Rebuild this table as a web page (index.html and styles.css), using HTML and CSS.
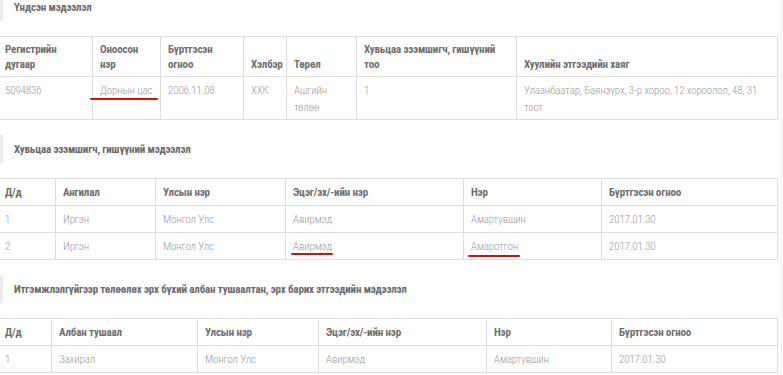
FILE: index.html
```html
<!DOCTYPE html>
<html lang="mn">
<head>
<meta charset="utf-8">
<title>Мэдээлэл</title>
<link rel="stylesheet" href="styles.css">
</head>
<body>
<div class="page">
  <section class="section">
    <h3 class="section-title">Үндсэн мэдээлэл</h3>
    <table class="grid grid-main">
      <colgroup>
        <col class="w95"><col class="w68"><col class="w83"><col class="w43"><col class="w70"><col class="w160"><col>
      </colgroup>
      <thead>
        <tr>
          <th>Регистрийн дугаар</th>
          <th>Оноосон нэр</th>
          <th>Бүртгэсэн огноо</th>
          <th>Хэлбэр</th>
          <th>Төрөл</th>
          <th>Хувьцаа эзэмшигч, гишүүний тоо</th>
          <th>Хуулийн этгээдийн хаяг</th>
        </tr>
      </thead>
      <tbody>
        <tr>
          <td>5094836</td>
          <td><span class="mark mark-a">Дорнын цас</span></td>
          <td>2006.11.08</td>
          <td>ХХК</td>
          <td>Ашгийн төлөө</td>
          <td>1</td>
          <td>Улаанбаатар, Баянзүрх, 3-р хороо, 12 хороолол, 48, 31 тоот</td>
        </tr>
      </tbody>
    </table>
  </section>

  <section class="section">
    <h3 class="section-title">Хувьцаа эзэмшигч, гишүүний мэдээлэл</h3>
    <table class="grid">
      <colgroup>
        <col class="w58"><col class="w100"><col class="w130"><col class="w178"><col class="w138"><col>
      </colgroup>
      <thead>
        <tr>
          <th>Д/д</th>
          <th>Ангилал</th>
          <th>Улсын нэр</th>
          <th>Эцэг/эх/-ийн нэр</th>
          <th>Нэр</th>
          <th>Бүртгэсэн огноо</th>
        </tr>
      </thead>
      <tbody>
        <tr>
          <td>1</td>
          <td>Иргэн</td>
          <td>Монгол Улс</td>
          <td>Авирмэд</td>
          <td>Амартүвшин</td>
          <td>2017.01.30</td>
        </tr>
        <tr>
          <td>2</td>
          <td>Иргэн</td>
          <td>Монгол Улс</td>
          <td><span class="mark mark-b">Авирмэд</span></td>
          <td><span class="mark mark-c">Амаротгон</span></td>
          <td>2017.01.30</td>
        </tr>
      </tbody>
    </table>
  </section>

  <section class="section">
    <h3 class="section-title">Итгэмжлэлгүйгээр төлөөлөх эрх бүхий албан тушаалтан, эрх барих этгээдийн мэдээлэл</h3>
    <table class="grid">
      <colgroup>
        <col class="w54"><col class="w146"><col class="w121"><col class="w168"><col class="w125"><col>
      </colgroup>
      <thead>
        <tr>
          <th>Д/д</th>
          <th>Албан тушаал</th>
          <th>Улсын нэр</th>
          <th>Эцэг/эх/-ийн нэр</th>
          <th>Нэр</th>
          <th>Бүртгэсэн огноо</th>
        </tr>
      </thead>
      <tbody>
        <tr>
          <td>1</td>
          <td>Захирал</td>
          <td>Монгол Улс</td>
          <td>Авирмэд</td>
          <td>Амартүвшин</td>
          <td>2017.01.30</td>
        </tr>
      </tbody>
    </table>
  </section>
</div>
</body>
</html>
```

FILE: styles.css
```css
* { box-sizing: border-box; }

html, body {
  margin: 0;
  padding: 0;
  background: #fff;
}

body {
  font-family: Roboto, "Liberation Sans", sans-serif;
  font-stretch: 77%;
  font-size: 11px;
  letter-spacing: -0.15px;
  color: #9a9a9a;
  overflow: hidden;
}

.page {
  width: 782px;
  margin-top: -7px;
  border-right: 1px solid #f0f0f0;
  min-height: 400px;
}

.section {
  display: flex;
  flex-direction: column;
}

.section-title {
  margin: 0 0 15px 0;
  height: 28px;
  display: flex;
  align-items: center;
  border-left: 3px solid #ececec;
  padding-left: 11px;
  font-size: 11px;
  font-weight: 700;
  color: #6a6a6a;
}

.grid {
  width: 781px;
  margin: 0 0 15px -3px;
  border-collapse: collapse;
  table-layout: fixed;
}

.grid th,
.grid td {
  border: 1px solid #dedede;
  text-align: left;
  padding: 5px 7px 4px 7px;
}

.grid th {
  font-weight: 700;
  color: #6e6e6e;
  line-height: 15px;
  padding: 6px 7px 5px 7px;
  vertical-align: bottom;
}

.grid-main th {
  padding: 5px 7px 4px 7px;
}

.grid-main td {
  padding: 5px 7px 3px 7px;
}

.grid td {
  font-weight: 300;
  color: #9a9a9a;
  line-height: 17px;
  vertical-align: top;
}

.w43 { width: 43px; }
.w54 { width: 54px; }
.w58 { width: 58px; }
.w68 { width: 68px; }
.w70 { width: 70px; }
.w83 { width: 83px; }
.w95 { width: 95px; }
.w100 { width: 100px; }
.w121 { width: 121px; }
.w125 { width: 125px; }
.w130 { width: 130px; }
.w138 { width: 138px; }
.w146 { width: 146px; }
.w160 { width: 160px; }
.w168 { width: 168px; }
.w178 { width: 178px; }

.mark {
  position: relative;
  display: inline-block;
  white-space: nowrap;
}

.mark::after {
  content: "";
  position: absolute;
  height: 2px;
  background: #dc0d0d;
  border-radius: 1px;
}

.mark-a::after { left: -10px; right: -6px; top: 16px; }
.mark-b::after { left: -2px; right: -1px; top: 15px; }
.mark-c::after { left: -3px; right: -2px; top: 17px; }
```
